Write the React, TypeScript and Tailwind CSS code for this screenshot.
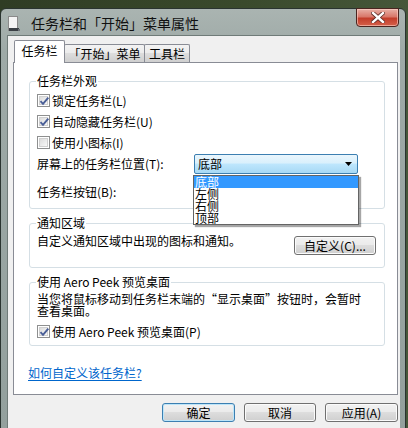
import React from 'react';

const Check = ({ checked }: { checked?: boolean }) => (
  <span className="w-[13px] h-[13px] border border-[#8e8f8f] bg-white flex items-center justify-center shrink-0">
    <span className="w-[9px] h-[9px] border border-[#d0d0d0] bg-linear-to-br from-[#dcdcdc] to-[#f8f8f8] flex items-center justify-center relative">
      {checked && (
        <svg width="11" height="10" viewBox="0 0 11 10" className="absolute left-[-1px] top-[-1px]">
          <path d="M1.5 5.2 L4 7.8 L9.3 1.6" fill="none" stroke="#4a5f97" strokeWidth="1.9" />
        </svg>
      )}
    </span>
  </span>
);

const Btn = ({ label, def, className }: { label: string; def?: boolean; className: string }) => (
  <div
    className={
      (def
        ? 'border-[#3c7fb1] shadow-[inset_0_0_0_1px_#bde5f9] '
        : 'border-[#707070] shadow-[inset_0_0_0_1px_#fbfbfb] ') +
      'h-[19px] rounded-[3px] border bg-[linear-gradient(#f2f2f2,#ebebeb_45%,#dddddd_50%,#cfcfcf)] flex items-center justify-center text-[12px] leading-[12px] text-black ' +
      className
    }
  >
    {label}
  </div>
);

const Row = ({ checked, label }: { checked?: boolean; label: string }) => (
  <div className="h-[21px] flex items-center gap-[2px]">
    <Check checked={checked} />
    <span className="leading-[12px]">{label}</span>
  </div>
);

export default function App() {
  return (
    <div className="w-[408px] h-[428px] bg-[linear-gradient(90deg,#2f3c24_0%,#3a4a2c_60%,#46573a_100%)] pt-[8px] overflow-hidden font-['Noto_Sans_CJK_SC',sans-serif] text-[12px] text-black">
      <div className="w-[406px] h-[421px] rounded-t-[6px] border border-[#2a3430] bg-[linear-gradient(180deg,#aab4b1_0%,#9eaaa7_10%,#93a09d_100%)] flex flex-col pl-[6px] pr-[5px]">
        {/* title bar */}
        <div className="h-[26px] flex items-start relative">
          <svg width="12" height="16" viewBox="0 0 12 16" className="mt-[7px] ml-[1px]">
            <rect x="0.5" y="0.5" width="9" height="14" fill="#f4f4f4" stroke="#8a8a8a" />
            <rect x="1" y="12" width="10" height="3" fill="#3a3f44" />
            <rect x="10" y="13" width="2" height="2" fill="#6b7176" />
          </svg>
          <span className="ml-[11px] mt-[6px] text-[14px] leading-[16px] text-[#111]">任务栏和「开始」菜单属性</span>
          <div className="absolute right-[1px] top-[-1px] w-[43px] h-[19px] rounded-b-[4px] border border-[#4a2520] bg-[linear-gradient(180deg,#e8b0a6_0%,#d9786a_45%,#c33e2b_55%,#d4604a_100%)] shadow-[inset_0_0_0_1px_rgba(255,210,200,0.6)] flex items-center justify-center">
            <svg width="14" height="11" viewBox="0 0 14 11">
              <path d="M2 1 L12 10 M12 1 L2 10" stroke="#5a2a24" strokeWidth="4" strokeLinecap="square" />
              <path d="M2 1 L12 10 M12 1 L2 10" stroke="#ffffff" strokeWidth="2.4" strokeLinecap="square" />
            </svg>
          </div>
        </div>

        {/* client area */}
        <div className="flex-1 bg-[#f0f0f0] border-t border-l border-[#6f7b78] pt-[4px]">
          {/* tabs */}
          <div className="h-[22px] ml-[6px] flex items-end">
            <div className="relative z-10 -mb-px h-[23px] w-[51px] bg-white border border-b-0 border-[#898c95] rounded-t-[2px] flex items-start justify-center pt-[3px]">
              <span className="leading-[14px]">任务栏</span>
            </div>
            <div className="h-[18px] w-[81px] -ml-px bg-[linear-gradient(#f3f3f3,#ebebeb_50%,#dddddd_50%,#cfcfcf)] border border-b-0 border-[#898c95] rounded-t-[2px] flex items-center justify-center">
              <span className="leading-[12px]">「开始」菜单</span>
            </div>
            <div className="h-[18px] w-[46px] -ml-px bg-[linear-gradient(#f3f3f3,#ebebeb_50%,#dddddd_50%,#cfcfcf)] border border-b-0 border-[#898c95] rounded-t-[2px] flex items-center justify-center">
              <span className="leading-[12px]">工具栏</span>
            </div>
          </div>

          {/* panel */}
          <div className="ml-[5px] w-[385px] h-[333px] bg-white border border-[#898c95] pl-[15px] pr-[12px] pt-[11px] relative">
            <fieldset className="border border-[#d5dfe5] rounded-[3px] pl-[7px] pb-[6px]">
              <legend className="px-[1px] ml-[-1px] leading-[14px]">任务栏外观</legend>
              <div className="pt-[2px]">
                <Row checked label="锁定任务栏(L)" />
                <Row checked label="自动隐藏任务栏(U)" />
                <Row label="使用小图标(I)" />
                <div className="h-[20px] flex items-center mt-[1px]">
                  <span className="w-[157px] leading-[12px]">屏幕上的任务栏位置(T):</span>
                  <div className="w-[164px] h-[20px] border border-[#3c7fb1] rounded-[2px] bg-[linear-gradient(#eaf6fd,#d9f0fc_45%,#bee6fd_50%,#a7d9f5)] flex items-center pl-[3px] pr-[5px] justify-between">
                    <span className="leading-[12px]">底部</span>
                    <svg width="7" height="4" viewBox="0 0 7 4">
                      <path d="M0 0 H7 L3.5 4 Z" fill="#000" />
                    </svg>
                  </div>
                </div>
                <div className="h-[20px] flex items-center mt-[8px]">
                  <span className="leading-[12px]">任务栏按钮(B):</span>
                </div>
              </div>
            </fieldset>

            <fieldset className="mt-[7px] border border-[#d5dfe5] rounded-[3px] pl-[7px] pr-[8px] pb-[12px]">
              <legend className="px-[1px] ml-[-1px] leading-[14px]">通知区域</legend>
              <div className="flex items-start justify-between pt-[5px]">
                <span className="leading-[12px]">自定义通知区域中出现的图标和通知。</span>
                <Btn label="自定义(C)..." className="w-[82px] mt-[1px]" />
              </div>
            </fieldset>

            <fieldset className="mt-[7px] border border-[#d5dfe5] rounded-[3px] pl-[7px] pb-[3px]">
              <legend className="px-[1px] ml-[-1px] leading-[14px]">使用 Aero Peek 预览桌面</legend>
              <div className="pt-[4px] leading-[12px] whitespace-nowrap">
                当您将鼠标移动到任务栏末端的“显示桌面”按钮时，会暂时
                <br />
                查看桌面。
              </div>
              <div className="mt-[4px]">
                <Row checked label="使用 Aero Peek 预览桌面(P)" />
              </div>
            </fieldset>

            <div className="mt-[21px] -ml-[1px] leading-[12px] text-[#0066cc] underline underline-offset-2">
              如何自定义该任务栏?
            </div>

            {/* open dropdown list */}
            <div className="absolute left-[179px] top-[112px] w-[166px] h-[50px] bg-white border border-[#646464] shadow-[2px_2px_1px_rgba(0,0,0,0.35)] flex flex-col">
              <div className="h-[12px] bg-[#3399ff] text-white leading-[12px] pl-[1px]">底部</div>
              <div className="h-[12px] leading-[12px] pl-[1px]">左侧</div>
              <div className="h-[12px] leading-[12px] pl-[1px]">右侧</div>
              <div className="h-[12px] leading-[12px] pl-[1px]">顶部</div>
            </div>
          </div>

          {/* bottom buttons */}
          <div className="ml-[5px] w-[385px] mt-[8px] flex justify-end gap-[9px]">
            <Btn def label="确定" className="w-[73px]" />
            <Btn label="取消" className="w-[72px]" />
            <Btn label="应用(A)" className="w-[73px]" />
          </div>
        </div>
      </div>
    </div>
  );
}
